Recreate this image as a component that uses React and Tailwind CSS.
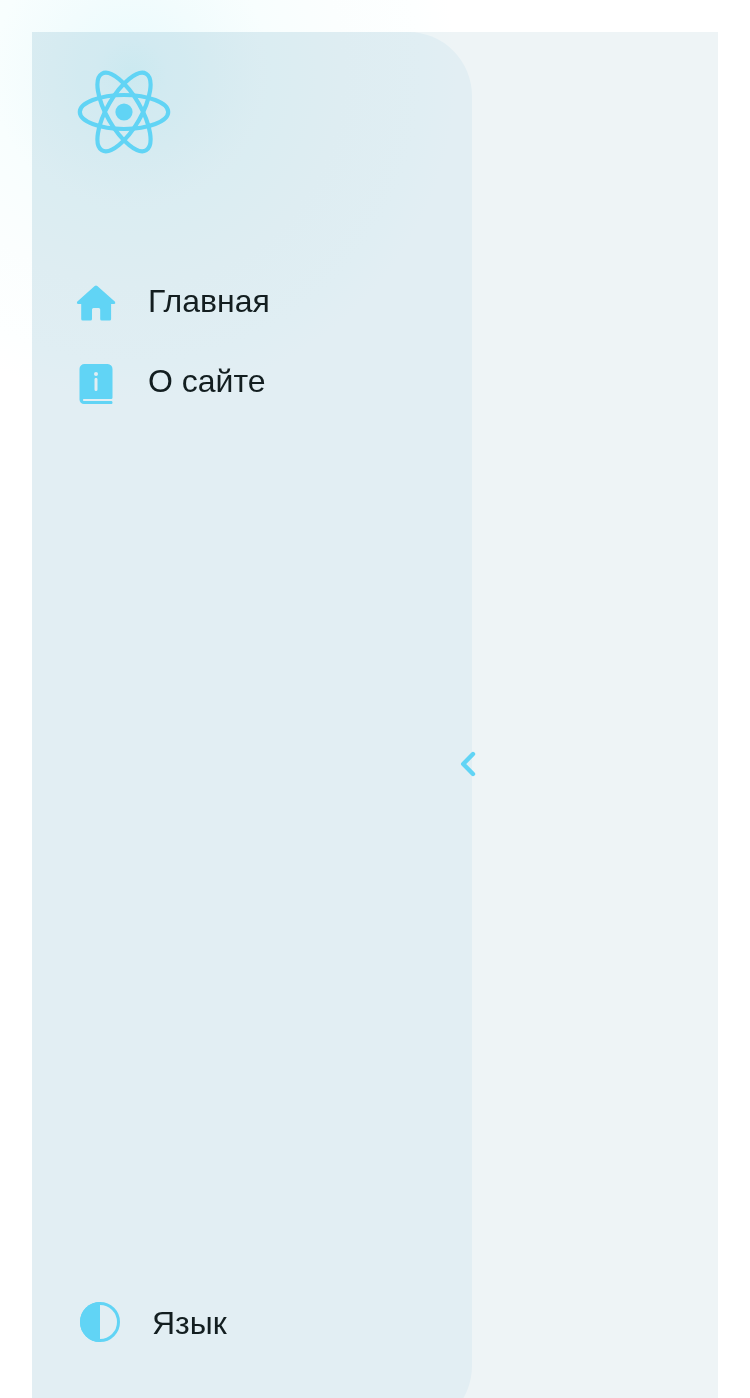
import React from "react";

function ReactLogo() {
  return (
    <svg className="h-[84px] w-[94px]" viewBox="-47 -42 94 84" fill="none" stroke="currentColor" strokeWidth="4.2">
      <circle r="8.6" fill="currentColor" stroke="none" />
      <ellipse rx="44.2" ry="17" />
      <ellipse rx="44.2" ry="17" transform="rotate(60)" />
      <ellipse rx="44.2" ry="17" transform="rotate(120)" />
    </svg>
  );
}

function HomeIcon() {
  return (
    <svg className="size-12" viewBox="0 0 48 48" fill="currentColor">
      <path d="M22.7 9Q24 8 25.3 9L43 24.8Q44 26.5 42.3 27H39.1V42Q39.1 43.6 37.6 43.6H29.7Q28.2 43.6 28.2 42V32.5Q28.2 31 26.7 31H21.5Q20 31 20 32.5V42Q20 43.6 18.5 43.6H10.7Q9.2 43.6 9.2 42V27H5.9Q4.2 26.5 5.1 24.8Z" />
    </svg>
  );
}

function BookIcon() {
  return (
    <svg className="size-12" viewBox="0 0 48 48" fill="currentColor">
      <path
        fillRule="evenodd"
        d="M12.5 7H35.7A5 5 0 0 1 40.5 12V40.5Q40.5 42 39.2 42H11.9A1 1 0 0 0 11.9 44H39.5Q40.5 44 40.5 45.5Q40.5 47 39.5 47H12A4.5 4.5 0 0 1 7.5 42.5V12A5 5 0 0 1 12.5 7ZM24 15A2 2 0 1 0 24 19A2 2 0 1 0 24 15ZM22.5 22.2V32.5A1.5 1.5 0 0 0 25.5 32.5V22.2A1.5 1.5 0 0 0 22.5 22.2Z"
      />
    </svg>
  );
}

function ContrastIcon() {
  return (
    <svg className="size-10" viewBox="0 0 40 40" fill="none">
      <circle cx="20" cy="20" r="18.5" stroke="currentColor" strokeWidth="3" />
      <path d="M20 0A20 20 0 0 0 20 40Z" fill="currentColor" />
    </svg>
  );
}

const links = [
  { label: "Главная", Icon: HomeIcon },
  { label: "О сайте", Icon: BookIcon },
];

export default function App() {
  return (
    <div className="relative h-[1398px] overflow-hidden bg-white px-8 pt-8 font-['Liberation_Sans',Arial,sans-serif] text-[32px] leading-[48px] text-[#131e20]">
      <main className="h-[1398px] bg-[#eef4f6]">
        <aside className="relative flex h-[1398px] w-[440px] flex-col rounded-r-[64px] bg-[#e2eef3]">
          <div className="relative z-10 pt-[38px] pl-[45px] text-[#61d4f5]">
            <ReactLogo />
          </div>
          <nav className="relative z-10 mt-[123px] flex flex-col gap-8 pl-10">
            {links.map(({ label, Icon }) => (
              <a key={label} className="flex h-12 items-center gap-7">
                <span className="text-[#61d4f5]"><Icon /></span>
                <span>{label}</span>
              </a>
            ))}
          </nav>
          <button className="mt-auto mb-[83px] flex h-12 items-center gap-8 pl-12">
            <span className="-mt-[2px] text-[#61d4f5]"><ContrastIcon /></span>
            <span>Язык</span>
          </button>
          <button className="absolute top-[718px] -right-[5px] text-[#61d4f5]" aria-label="Свернуть">
            <svg className="h-7 w-[18px]" viewBox="0 0 18 28" fill="none" stroke="currentColor" strokeWidth="4.4" strokeLinecap="round" strokeLinejoin="round">
              <path d="M14 4L4.2 14L14 24" />
            </svg>
          </button>
        </aside>
      </main>
      <div className="pointer-events-none absolute inset-0 mix-blend-multiply bg-[radial-gradient(circle_at_132px_74px,#e6fafc_0px,#edfbfd_35px,#f2fcfd_80px,#f8fefe_140px,#fbfefe_210px,#fdffff_290px,#ffffff_325px)]" />
    </div>
  );
}
